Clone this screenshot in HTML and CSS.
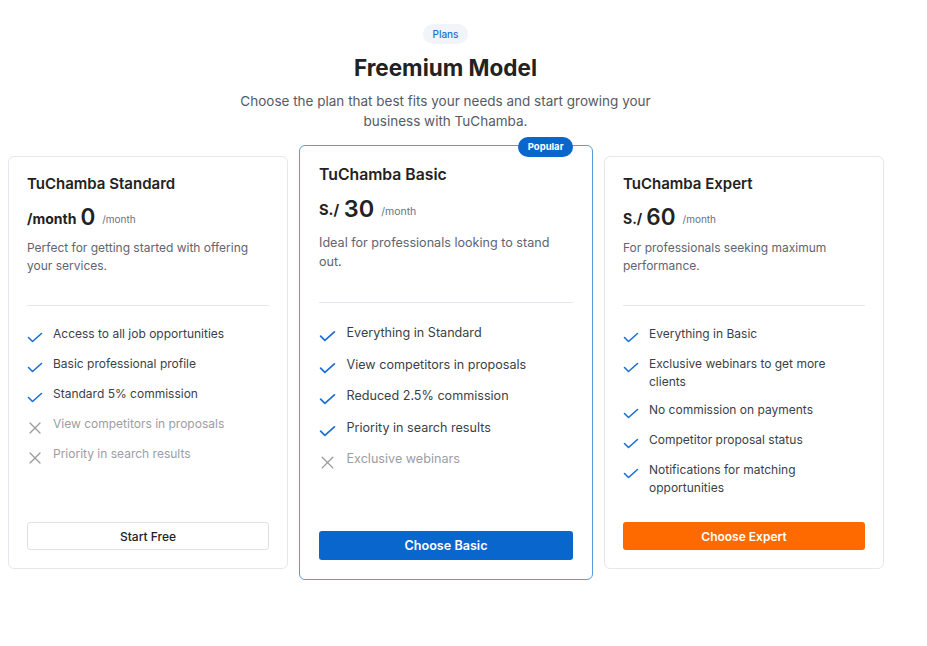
FILE: index.html
```html
<!DOCTYPE html>
<html lang="en">
<head>
<meta charset="utf-8">
<title>Freemium Model</title>
<link rel="stylesheet" href="styles.css">
</head>
<body>
<section class="plans">
  <header class="head">
    <span class="tag">Plans</span>
    <h1 class="title">Freemium Model</h1>
    <p class="lead">Choose the plan that best fits your needs and start growing your business with TuChamba.</p>
  </header>

  <div class="grid">
    <article class="card">
      <h2 class="name">TuChamba Standard</h2>
      <div class="price"><span class="cur">/month</span><span class="amt">0</span><span class="per">/month</span></div>
      <p class="desc">Perfect for getting started with offering your services.</p>
      <hr class="sep">
      <ul class="feats">
        <li class="feat"><svg class="ic ok" viewBox="0 0 16 16"><polyline points="1.5,8.5 5.5,12.5 14.5,4.5"/></svg><span>Access to all job opportunities</span></li>
        <li class="feat"><svg class="ic ok" viewBox="0 0 16 16"><polyline points="1.5,8.5 5.5,12.5 14.5,4.5"/></svg><span>Basic professional profile</span></li>
        <li class="feat"><svg class="ic ok" viewBox="0 0 16 16"><polyline points="1.5,8.5 5.5,12.5 14.5,4.5"/></svg><span>Standard 5% commission</span></li>
        <li class="feat off"><svg class="ic no" viewBox="0 0 16 16"><path d="M3 4 L13 14 M13 4 L3 14"/></svg><span>View competitors in proposals</span></li>
        <li class="feat off"><svg class="ic no" viewBox="0 0 16 16"><path d="M3 4 L13 14 M13 4 L3 14"/></svg><span>Priority in search results</span></li>
      </ul>
      <button class="btn btn-ghost">Start Free</button>
    </article>

    <article class="card card-pop">
      <span class="badge">Popular</span>
      <h2 class="name">TuChamba Basic</h2>
      <div class="price"><span class="cur">S./</span><span class="amt">30</span><span class="per">/month</span></div>
      <p class="desc">Ideal for professionals looking to stand out.</p>
      <hr class="sep">
      <ul class="feats">
        <li class="feat"><svg class="ic ok" viewBox="0 0 16 16"><polyline points="1.5,8.5 5.5,12.5 14.5,4.5"/></svg><span>Everything in Standard</span></li>
        <li class="feat"><svg class="ic ok" viewBox="0 0 16 16"><polyline points="1.5,8.5 5.5,12.5 14.5,4.5"/></svg><span>View competitors in proposals</span></li>
        <li class="feat"><svg class="ic ok" viewBox="0 0 16 16"><polyline points="1.5,8.5 5.5,12.5 14.5,4.5"/></svg><span>Reduced 2.5% commission</span></li>
        <li class="feat"><svg class="ic ok" viewBox="0 0 16 16"><polyline points="1.5,8.5 5.5,12.5 14.5,4.5"/></svg><span>Priority in search results</span></li>
        <li class="feat off"><svg class="ic no" viewBox="0 0 16 16"><path d="M3 4 L13 14 M13 4 L3 14"/></svg><span>Exclusive webinars</span></li>
      </ul>
      <button class="btn btn-blue">Choose Basic</button>
    </article>

    <article class="card">
      <h2 class="name">TuChamba Expert</h2>
      <div class="price"><span class="cur">S./</span><span class="amt">60</span><span class="per">/month</span></div>
      <p class="desc">For professionals seeking maximum performance.</p>
      <hr class="sep">
      <ul class="feats">
        <li class="feat"><svg class="ic ok" viewBox="0 0 16 16"><polyline points="1.5,8.5 5.5,12.5 14.5,4.5"/></svg><span>Everything in Basic</span></li>
        <li class="feat"><svg class="ic ok" viewBox="0 0 16 16"><polyline points="1.5,8.5 5.5,12.5 14.5,4.5"/></svg><span>Exclusive webinars to get more clients</span></li>
        <li class="feat"><svg class="ic ok" viewBox="0 0 16 16"><polyline points="1.5,8.5 5.5,12.5 14.5,4.5"/></svg><span>No commission on payments</span></li>
        <li class="feat"><svg class="ic ok" viewBox="0 0 16 16"><polyline points="1.5,8.5 5.5,12.5 14.5,4.5"/></svg><span>Competitor proposal status</span></li>
        <li class="feat"><svg class="ic ok" viewBox="0 0 16 16"><polyline points="1.5,8.5 5.5,12.5 14.5,4.5"/></svg><span>Notifications for matching opportunities</span></li>
      </ul>
      <button class="btn btn-orange">Choose Expert</button>
    </article>
  </div>
</section>
</body>
</html>
```

FILE: styles.css
```css
* { box-sizing: border-box; }

body {
  margin: 8px;
  background: #ffffff;
  font-family: Inter, "Noto Sans", "Liberation Sans", sans-serif;
  color: #222222;
}

.plans {
  width: 875px;
  padding: 16px 0 48px;
}

.head {
  display: flex;
  flex-direction: column;
  align-items: center;
  text-align: center;
}

.tag {
  display: inline-block;
  height: 20px;
  line-height: 20px;
  padding: 0 9px;
  border-radius: 999px;
  background: #f1f4f9;
  color: #1f6fd1;
  font-size: 10px;
  font-weight: 500;
}

.title {
  margin: 8px 0 7px;
  font-size: 22.5px;
  line-height: 32px;
  font-weight: 700;
  color: #222222;
}

.lead {
  margin: 0;
  max-width: 440px;
  font-size: 13.5px;
  line-height: 20px;
  color: #555b65;
}

.grid {
  margin-top: 25px;
  display: grid;
  grid-template-columns: repeat(3, 280px);
  gap: 18px;
  align-items: stretch;
}

.card {
  position: relative;
  display: flex;
  flex-direction: column;
  padding: 18px;
  border: 1px solid #e4e7ec;
  border-radius: 6px;
  background: #ffffff;
}

.name {
  margin: 0;
  font-size: 15px;
  line-height: 18px;
  font-weight: 600;
  color: #222222;
}

.price {
  margin-top: 8px;
  height: 30px;
  display: flex;
  align-items: center;
}

.cur {
  font-size: 14px;
  font-weight: 700;
  color: #222222;
  margin-right: 4px;
  position: relative;
  top: 2px;
}

.amt {
  font-size: 22.5px;
  font-weight: 600;
  color: #222222;
}

.per {
  margin-left: 7px;
  font-size: 10px;
  color: #6b7280;
  position: relative;
  top: 3px;
}

.desc {
  margin: 8px 0 30px;
  font-size: 12px;
  line-height: 18px;
  color: #606570;
}

.sep {
  margin: 0;
  border: 0;
  height: 1px;
  background: #e5e8ee;
}

.feats {
  list-style: none;
  margin: 19px 0 25px;
  padding: 0;
  display: flex;
  flex-direction: column;
  gap: 10px;
}

.feat {
  display: flex;
  align-items: flex-start;
  gap: 10px;
  font-size: 12px;
  line-height: 18px;
  color: #3a3f47;
}

.feat.off { color: #9a9ea6; }

.ic {
  flex: 0 0 16px;
  width: 16px;
  height: 16px;
  margin-top: 4px;
  fill: none;
  stroke-width: 1.6;
  stroke-linecap: round;
  stroke-linejoin: round;
}

.ic.ok { stroke: #1a6fd6; }
.ic.no { stroke: #9a9a9a; stroke-width: 1.3; }

.btn {
  margin-top: auto;
  height: 28px;
  width: 100%;
  border-radius: 3px;
  font-family: inherit;
  font-size: 12px;
  cursor: pointer;
}

.btn-ghost {
  background: #ffffff;
  border: 1px solid #dde1e7;
  color: #222222;
  font-weight: 500;
}

.btn-blue {
  background: #0866cc;
  border: 0;
  color: #ffffff;
  font-weight: 600;
}

.btn-orange {
  background: #ff6a00;
  border: 0;
  color: #ffffff;
  font-weight: 600;
}

/* Highlighted (popular) card: drawn about 5% larger than its neighbours */
.card-pop {
  margin: -11px -7px;
  padding: 19px;
  border-color: #5a9ae0;
}

.card-pop .name { font-size: 15.75px; line-height: 19px; }
.card-pop .price { margin-top: 8.5px; height: 31.5px; }
.card-pop .cur { font-size: 14.7px; margin-right: 4.5px; }
.card-pop .amt { font-size: 23.5px; }
.card-pop .per { font-size: 10.5px; }
.card-pop .desc { margin: 8.5px 0 31.5px; font-size: 12.6px; line-height: 19px; }
.card-pop .feats { margin: 20px 0 26px; gap: 10.5px; }
.card-pop .feat { font-size: 12.6px; line-height: 19px; gap: 10.5px; }
.card-pop .ic { flex-basis: 17px; width: 17px; height: 17px; margin-top: 4px; }
.card-pop .btn { height: 29.5px; font-size: 12.6px; }

.badge {
  position: absolute;
  top: -9px;
  right: 19px;
  height: 20px;
  line-height: 20px;
  padding: 0 9.5px;
  border-radius: 999px;
  background: #0866cc;
  color: #ffffff;
  font-size: 9.5px;
  font-weight: 700;
}
```
